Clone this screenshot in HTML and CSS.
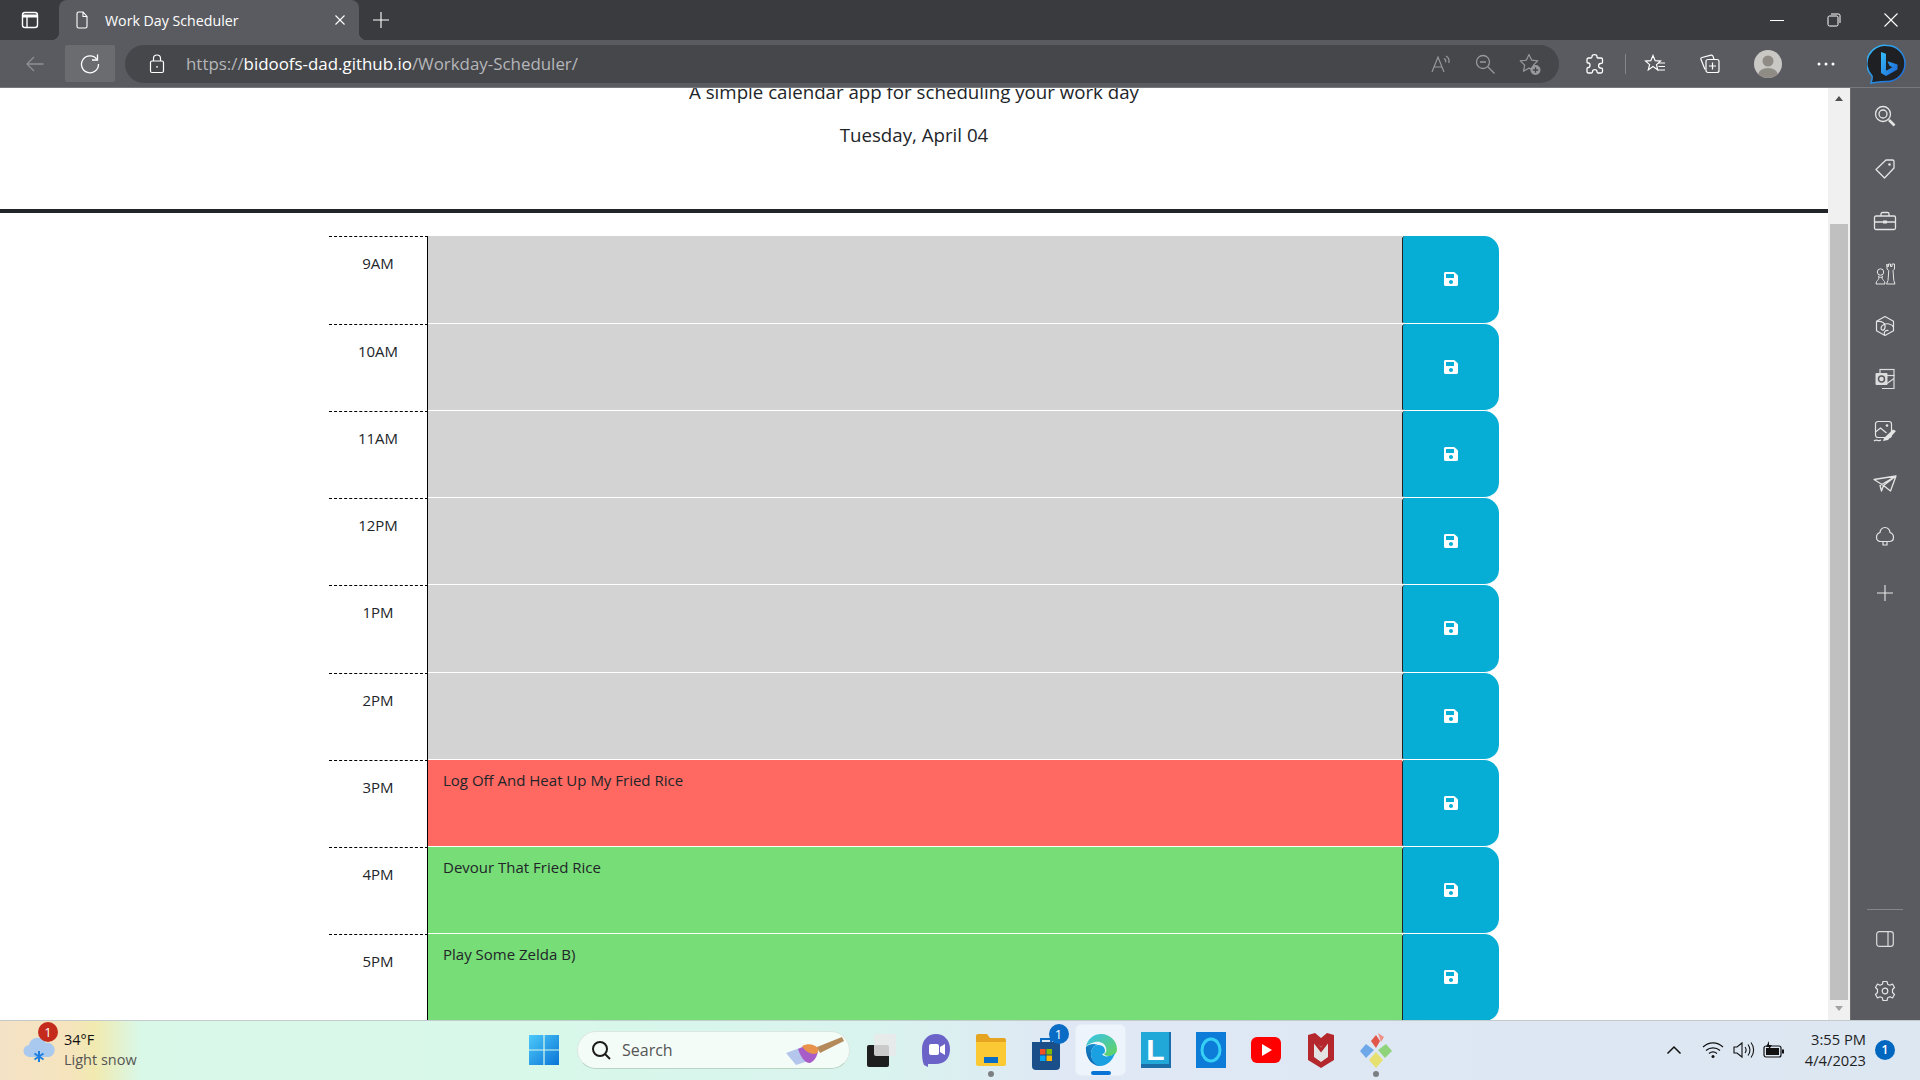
FILE: index.html
```html
<!DOCTYPE html>
<html lang="en">
<head>
<meta charset="utf-8">
<title>Work Day Scheduler</title>
<link rel="stylesheet" href="styles.css">
</head>
<body>
<svg class="defs" width="0" height="0" aria-hidden="true">
  <symbol id="save" viewBox="0 0 448 512"><path fill="currentColor" d="M433.941 129.941l-83.882-83.882A48 48 0 0 0 316.118 32H48C21.49 32 0 53.49 0 80v352c0 26.51 21.49 48 48 48h352c26.51 0 48-21.49 48-48V163.882a48 48 0 0 0-14.059-33.941zM224 416c-35.346 0-64-28.654-64-64 0-35.346 28.654-64 64-64s64 28.654 64 64c0 35.346-28.654 64-64 64zm96-304.52V212c0 6.627-5.373 12-12 12H76c-6.627 0-12-5.373-12-12V108c0-6.627 5.373-12 12-12h228.52c3.183 0 6.235 1.264 8.485 3.515l3.48 3.48A11.996 11.996 0 0 1 320 111.48z"/></symbol>
</svg>
<div class="app">
  <div class="tabstrip">
    <span class="ico panel-ico"><svg width="20" height="20" viewBox="0 0 20 20" fill="none" stroke="#fff" stroke-width="1.4"><rect x="2.500" y="2.500" width="15" height="15" rx="2.500"/><path d="M3 6h14" stroke-width="3"/><path d="M7 7v10"/></svg></span>
    <div class="tab">
      <svg class="doc" width="20" height="20" viewBox="0 0 20 20" fill="none" stroke="#fff" stroke-width="1.100"><path d="M5 3.500a1.500 1.500 0 0 1 1.500-1.500h4.500l4 4.500v10a1.500 1.500 0 0 1-1.500 1.500h-7A1.500 1.500 0 0 1 5 16.500z M11 2v4.500h4"/></svg>
      <span class="tab-title">Work Day Scheduler</span>
      <svg class="tab-x" width="12" height="12" viewBox="0 0 12 12" stroke="#fff" stroke-width="1.100"><path d="M1.500 1.500l9 9M10.500 1.500l-9 9"/></svg>
    </div>
    <svg class="plus" width="18" height="18" viewBox="0 0 18 18" stroke="#fff" stroke-width="1.100"><path d="M9 1v16M1 9h16"/></svg>
    <div class="winctl">
      <svg width="14" height="14" viewBox="0 0 14 14" stroke="#fff" stroke-width="1"><path d="M0 7.500h14"/></svg>
      <svg width="14" height="14" viewBox="0 0 14 14" fill="none" stroke="#fff" stroke-width="1"><rect x="1" y="3" width="10" height="10" rx="1.500"/><path d="M4 1h7.500A1.500 1.500 0 0 1 13 2.500V10"/></svg>
      <svg width="14" height="14" viewBox="0 0 14 14" stroke="#fff" stroke-width="1.100"><path d="M.5.500l13 13M13.500.500l-13 13"/></svg>
    </div>
  </div>
  <div class="toolbar">
    <span class="tbtn back"><svg width="20" height="20" viewBox="0 0 20 20" fill="none" stroke="#8e8f93" stroke-width="1.300"><path d="M18.500 10H2M9 3l-7 7 7 7"/></svg></span>
    <span class="tbtn reload"><svg width="22" height="22" viewBox="0 0 22 22" fill="none" stroke="#fff" stroke-width="1.300"><path d="M18 6.500A8.500 8.500 0 1 0 19.500 11"/><path d="M18.500 1.500v5.500h-5.500"/></svg></span>
    <div class="addr">
      <svg class="lock" width="16" height="20" viewBox="0 0 16 20" fill="none" stroke="#fff" stroke-width="1.200"><rect x="1.500" y="7" width="13" height="11.500" rx="1.500"/><path d="M4.500 7V4.500a3.500 3.500 0 0 1 7 0V7"/><circle cx="8" cy="12.800" r=".9" fill="#fff" stroke="none"/></svg>
      <span class="url"><span class="dim">https://</span>bidoofs-dad.github.io<span class="dim">/Workday-Scheduler/</span></span>
      <div class="addr-icons">
        <svg width="22" height="22" viewBox="0 0 22 22" fill="none" stroke="#98999c" stroke-width="1.200"><path d="M2 19L8 4l6 15M4 14h8"/><path d="M14 5.500c1.500.8 2 2.200 1.600 3.800M16 3c2.800 1.600 3.600 4.200 2.700 7"/></svg>
        <svg width="22" height="22" viewBox="0 0 22 22" fill="none" stroke="#98999c" stroke-width="1.300"><circle cx="9" cy="9" r="6.500"/><path d="M14 14l6.500 6.500M6 9h6"/></svg>
        <svg width="24" height="24" viewBox="0 0 24 24" fill="none" stroke="#98999c" stroke-width="1.200"><path d="M11 2.500l2.700 5.700 6.100.7-4.500 4.200 1.200 6-5.500-3-5.500 3 1.200-6L2.200 8.900l6.100-.7z" stroke-linejoin="round"/><circle cx="17.500" cy="18" r="5" fill="#98999c" stroke="none"/><path d="M17.500 15.300v5.400M14.800 18h5.400" stroke="#46474b" stroke-width="1.300"/></svg>
      </div>
    </div>
    <div class="tools">
      <svg class="t-ext" width="20" height="22" viewBox="0 0 20 22" fill="none" stroke="#fff" stroke-width="1.300"><path d="M7 3.500c0-2.500 5-2.500 5 0 0 1 0 1.500 1 1.500h3c1 0 1.500.5 1.500 1.500v3c0 1-1 1-2 1-2.500 0-2.500 4.500 0 4.500 1 0 2 0 2 1v2.500c0 1-.5 1.500-1.500 1.500h-3c-1 0-1-.8-1-1.500 0-2.500-4.500-2.500-4.500 0 0 .7 0 1.500-1 1.500H3.500c-1 0-1.500-.5-1.500-1.500v-3c0-1 1-1 1.500-1 2 0 2-4.500 0-4.500-.5 0-1.500 0-1.500-1V6.500C2 5.500 2.500 5 3.500 5H6c1 0 1-.7 1-1.500z"/></svg>
      <span class="sep"></span>
      <svg class="t-fav" width="22" height="22" viewBox="0 0 22 22" fill="none" stroke="#fff" stroke-width="1.200"><path d="M9 2.500l2.200 5.200 5.300.4-4 3.500 1.200 5.300L9 13.600l-4.700 3.300 1.300-5.300-4-3.500 5.200-.4z"/><path d="M14 10h7M14.500 13.500H21M13.500 17H21" stroke-width="1.100"/></svg>
      <svg class="t-col" width="22" height="22" viewBox="0 0 22 22" fill="none" stroke="#fff" stroke-width="1.200"><path d="M6 16.500L2 6.500c-.4-1 0-1.800 1-2l9-2.300c1-.2 1.700.2 2 1.100L15 6"/><rect x="7" y="6.500" width="13" height="13" rx="2"/><path d="M13.500 9.500v7M10 13h7"/></svg>
      <svg class="t-pro" width="28" height="28" viewBox="0 0 28 28"><defs><clipPath id="pc"><circle cx="14" cy="14" r="14"/></clipPath></defs><circle cx="14" cy="14" r="14" fill="#cac8c4"/><g clip-path="url(#pc)" fill="#8f8c85"><circle cx="14" cy="11" r="5.500"/><ellipse cx="14" cy="25" rx="10" ry="7"/></g></svg>
      <svg class="t-more" width="18" height="4" viewBox="0 0 18 4" fill="#fff"><circle cx="2" cy="2" r="1.500"/><circle cx="9" cy="2" r="1.500"/><circle cx="16" cy="2" r="1.500"/></svg>
      <svg class="t-bing" width="40" height="40" viewBox="0 0 40 40"><defs><linearGradient id="bg" x1="0" y1="0" x2="1" y2="1"><stop offset="0" stop-color="#37bdf8"/><stop offset="1" stop-color="#1b66d8"/></linearGradient></defs><path d="M20 1.500a18 18 0 0 1 0 36c-5 0-12 1-16 1.500 1-3 1.500-5 1-7A18 18 0 0 1 20 1.500z" fill="#1e2023" stroke="url(#bg)" stroke-width="1.500"/><path d="M14 8l5 1.800v17l6.500-3.600-3-1.400-2-4.600 10 3.400v5L19 32l-5-3z" fill="url(#bg)"/></svg>
    </div>
  </div>
  <div class="middle">
    <main class="page">
      <header class="jumbo">
        <p class="lead">A simple calendar app for scheduling your work day</p>
        <p class="today">Tuesday, April 04</p>
      </header>
      <div class="container">
        <div class="row"><div class="hour">9AM</div><textarea class="task past"></textarea><button class="save"><svg><use href="#save"/></svg></button></div>
        <div class="row"><div class="hour">10AM</div><textarea class="task past"></textarea><button class="save"><svg><use href="#save"/></svg></button></div>
        <div class="row"><div class="hour">11AM</div><textarea class="task past"></textarea><button class="save"><svg><use href="#save"/></svg></button></div>
        <div class="row"><div class="hour">12PM</div><textarea class="task past"></textarea><button class="save"><svg><use href="#save"/></svg></button></div>
        <div class="row"><div class="hour">1PM</div><textarea class="task past"></textarea><button class="save"><svg><use href="#save"/></svg></button></div>
        <div class="row"><div class="hour">2PM</div><textarea class="task past"></textarea><button class="save"><svg><use href="#save"/></svg></button></div>
        <div class="row"><div class="hour">3PM</div><textarea class="task present">Log Off And Heat Up My Fried Rice</textarea><button class="save"><svg><use href="#save"/></svg></button></div>
        <div class="row"><div class="hour">4PM</div><textarea class="task future">Devour That Fried Rice</textarea><button class="save"><svg><use href="#save"/></svg></button></div>
        <div class="row"><div class="hour">5PM</div><textarea class="task future">Play Some Zelda B)</textarea><button class="save"><svg><use href="#save"/></svg></button></div>
      </div>
    </main>
    <div class="scrollbar">
      <span class="arrow-up"></span>
      <span class="thumb"></span>
      <span class="arrow-down"></span>
    </div>
    <aside class="sidebar">
      <span class="sb"><svg width="22" height="22" viewBox="0 0 22 22" fill="none" stroke="#e4e4e4" stroke-width="1.300"><circle cx="9" cy="9" r="7.500"/><circle cx="9" cy="9" r="4"/><path d="M15 15l5.500 5.500" stroke-width="2.600"/></svg></span>
      <span class="sb"><svg width="22" height="22" viewBox="0 0 22 22" fill="none" stroke="#e4e4e4" stroke-width="1.300"><path d="M12 2h6.500A1.500 1.500 0 0 1 20 3.500V10L10.500 20 2 11.500z" stroke-linejoin="round"/><circle cx="15.500" cy="6.500" r="1.300" fill="#e4e4e4" stroke="none"/></svg></span>
      <span class="sb"><svg width="24" height="20" viewBox="0 0 24 20" fill="none" stroke="#e4e4e4" stroke-width="1.300"><rect x="1.500" y="5" width="21" height="13.500" rx="1.500"/><path d="M8 5V3a1.500 1.500 0 0 1 1.500-1.500h5A1.500 1.500 0 0 1 16 3v2M1.500 11h21"/><rect x="10" y="9.500" width="4" height="3" fill="#e4e4e4" stroke="none"/></svg></span>
      <span class="sb"><svg width="22" height="22" viewBox="0 0 22 22" fill="none" stroke="#e4e4e4" stroke-width="1"><path d="M13 1v2.500h1.500V1h2v2.500H18V1h2.500v5L19 7.500l.8 10 1.200 3.500H12.500l1.500-3.500.8-10L13 6V1z"/><circle cx="6.500" cy="9" r="3.200"/><path d="M5 12.500L4.500 14c.5.500 3.500.5 4 0L8 12.500M5 14c0 2-1 3-2.500 4.500L2 21h9l-.5-2.500C9 17 8 16 8 14"/></svg></span>
      <span class="sb"><svg width="22" height="22" viewBox="0 0 22 22" fill="none" stroke="#e4e4e4" stroke-width="1.200"><path d="M11 1.500l8.500 4.800v9.400L11 20.500l-8.500-4.800V6.300z" stroke-linejoin="round"/><path d="M3 6.500c5-1 9 2 8 6s-4 3-4 .5 4-5 8-4 4 3 4 3M10.500 20c-1-3 1-5 4-4.500"/></svg></span>
      <span class="sb"><svg width="22" height="22" viewBox="0 0 22 22" fill="none" stroke="#dcdcdc" stroke-width="1.200"><rect x="6" y="1.500" width="14" height="6"/><path d="M8 7.500h12v13H8M20 10.500l-7 5"/><rect x="1.500" y="5" width="12" height="12" rx="1" fill="#dcdcdc" stroke="none"/><circle cx="7.500" cy="11" r="3" fill="none" stroke="#5a5b60" stroke-width="1.500"/></svg></span>
      <span class="sb"><svg width="24" height="24" viewBox="0 0 24 24" fill="none" stroke="#e4e4e4" stroke-width="1.200"><rect x="2.500" y="1.500" width="16" height="16" rx="2.500"/><path d="M2.500 12l5-4 6 5"/><circle cx="14" cy="5.500" r="1.300" fill="#e4e4e4" stroke="none"/><path d="M11 18l9-8.500 3 1.500-8 9-5 1z" fill="#e4e4e4" stroke="none"/><path d="M1 21c3-2.500 4 1 7-1"/></svg></span>
      <span class="sb"><svg width="24" height="18" viewBox="0 0 24 18" fill="none" stroke="#e4e4e4" stroke-width="1.300"><path d="M1 4.500L23 1l-5.500 15-7-5.500zM23 1L7 10.500 8.500 16l2-5.500z" stroke-linejoin="round"/></svg></span>
      <span class="sb"><svg width="20" height="22" viewBox="0 0 20 22" fill="none" stroke="#e4e4e4" stroke-width="1.200"><path d="M10 1.500c3 0 5 2.500 5 5 2.500.8 3.500 2.500 3.500 5 0 2.500-2 4-4.500 4H6C3.500 15.500 1.500 14 1.500 11.500c0-2.500 1-4.200 3.500-5 0-2.500 2-5 5-5zM8 15.500v3.500h4v-3.500"/></svg></span>
      <span class="sb sb-plus"><svg width="16" height="16" viewBox="0 0 16 16" stroke="#e8e8e8" stroke-width="1.100"><path d="M8 0v16M0 8h16"/></svg></span>
      <span class="sb-spacer"></span>
      <span class="sb-line"></span>
      <span class="sb sb-low"><svg width="18" height="16" viewBox="0 0 18 16" fill="none" stroke="#dcdcdc" stroke-width="1.200"><rect x=".7" y=".7" width="16.600" height="14.600" rx="2.500"/><path d="M12 1v14"/></svg></span>
      <span class="sb sb-low"><svg width="22" height="22" viewBox="0 0 22 22" fill="none" stroke="#e4e4e4" stroke-width="1.200"><path d="M9 1.500h4l.7 2.800 2.300 1 2.500-1.300 2 3.500-2 2v3l2 2-2 3.500-2.500-1.300-2.300 1-.7 2.800H9l-.7-2.800-2.300-1-2.500 1.300-2-3.500 2-2v-3l-2-2 2-3.500L6 5.300l2.300-1z" stroke-linejoin="round"/><circle cx="11" cy="11" r="2.800"/></svg></span>
    </aside>
  </div>
  <footer class="taskbar">
    <div class="weather">
      <span class="w-ico">
        <svg width="34" height="34" viewBox="0 0 34 34"><path d="M8 24a6 6 0 0 1-1-12 9 9 0 0 1 17-2 7 7 0 0 1 3 14z" fill="#a9c9ee"/><path d="M17 18v11M12.500 20.500l9 6M21.500 20.500l-9 6" stroke="#1f7fe0" stroke-width="2"/></svg>
        <span class="w-badge">1</span>
      </span>
      <span class="w-text"><span class="w-temp">34°F</span><span class="w-cond">Light snow</span></span>
    </div>
    <div class="apps">
      <svg class="a-win" width="30" height="30" viewBox="0 0 30 30"><defs><linearGradient id="wg" x1="0" y1="0" x2="1" y2="1"><stop offset="0" stop-color="#4dcafa"/><stop offset="1" stop-color="#0a74d6"/></linearGradient></defs><path d="M0 0h14.400v14.400H0zM15.600 0H30v14.400H15.600zM0 15.600h14.400V30H0zM15.600 15.600H30V30H15.600z" fill="url(#wg)"/></svg>
      <div class="search">
        <svg width="22" height="22" viewBox="0 0 22 22" fill="none" stroke="#1b1b1b" stroke-width="2"><circle cx="10" cy="10" r="7"/><path d="M15 15l5 5"/></svg>
        <span class="s-label">Search</span>
        <svg class="s-art" width="62" height="30" viewBox="0 0 62 30"><path d="M2 18l22-8 6 14-18 6z" fill="#a4b8e8" opacity=".8"/><path d="M14 14c8-4 14-4 20 0 0 6-3 12-8 14-6 0-10-8-12-14z" fill="#a85cc8"/><path d="M18 11c6-3 11-2 15 1 3 3 1 7-3 7-5 0-10-4-12-8z" fill="#e8924a"/><path d="M33 12L58 2l2 4-24 12z" fill="#b58a5a"/></svg>
      </div>
      <span class="app-i"><svg width="30" height="34" viewBox="0 0 30 34"><rect x="1" y="12" width="22" height="22" rx="2" fill="#1e1e1e"/><rect x="8" y="1" width="22" height="22" rx="2" fill="#e9e9e9" opacity=".85"/></svg></span>
      <span class="app-i"><svg width="30" height="34" viewBox="0 0 30 34"><path d="M15 1c8 0 14 6 14 15 0 10-6 15-14 15H7v3l-4-2C1 28 1 22 1 16 1 7 7 1 15 1z" fill="#6b63c8"/><rect x="8" y="11" width="10" height="11" rx="2" fill="#fff"/><path d="M19 14l5-3v11l-5-3z" fill="#fff"/></svg></span>
      <span class="app-i dot"><svg width="32" height="34" viewBox="0 0 32 34"><path d="M1 3a2 2 0 0 1 2-2h9l3 4h14a2 2 0 0 1 2 2v4H1z" fill="#e6a520"/><path d="M1 9h30v22a2 2 0 0 1-2 2H3a2 2 0 0 1-2-2z" fill="#fbc934"/><rect x="9" y="24" width="14" height="6" fill="#0a6cc4"/></svg></span>
      <span class="app-i"><span class="store"><svg width="30" height="36" viewBox="0 0 30 36"><path d="M10 8V5h10v3" fill="none" stroke="#0a6cc4" stroke-width="2"/><path d="M1 8h28v24a4 4 0 0 1-4 4H5a4 4 0 0 1-4-4z" fill="#1a4f8a"/><rect x="9" y="15" width="5.500" height="5.500" fill="#f25022"/><rect x="15.500" y="15" width="5.500" height="5.500" fill="#7fba00"/><rect x="9" y="21.500" width="5.500" height="5.500" fill="#00a4ef"/><rect x="15.500" y="21.500" width="5.500" height="5.500" fill="#ffb900"/></svg><span class="s-badge">1</span></span></span>
      <span class="app-i active"><svg width="32" height="32" viewBox="0 0 32 32"><defs><linearGradient id="eg" x1="0" y1="1" x2="1" y2="0"><stop offset="0" stop-color="#0c59a4"/><stop offset="1" stop-color="#1ba1e2"/></linearGradient><linearGradient id="eg2" x1="0" y1="0" x2="1" y2="1"><stop offset="0" stop-color="#35c1f1"/><stop offset="1" stop-color="#66d45a"/></linearGradient></defs><path d="M16 0c9 0 16 7 16 15 0 5-4 7-8 7-3 0-5-1-5-2 2-1 3-3 2-6-1-5-6-7-11-6C5 9 2 11 1 13 2 6 8 0 16 0z" fill="url(#eg2)"/><path d="M1 13c3-3 8-4 12-2 -4 0-7 4-7 9 0 6 5 11 11 12C8 33 0 25 1 13z" fill="url(#eg)"/><path d="M13 11c4 0 7 2 7 6 0 1-1 3-3 3 1 2 4 3 7 2 2 0 4-1 6-3-2 7-8 13-15 13-6-1-9-7-9-12 0-5 3-9 7-9z" fill="#1ba1e2"/></svg></span>
      <span class="app-i"><span class="l-tile">L</span></span>
      <span class="app-i"><span class="alexa"><svg width="30" height="36" viewBox="0 0 30 36"><rect width="30" height="36" fill="#0d7bd8"/><ellipse cx="15" cy="18" rx="9" ry="11" fill="none" stroke="#37d0f5" stroke-width="3"/></svg></span></span>
      <span class="app-i"><svg width="30" height="26" viewBox="0 0 30 26"><rect width="30" height="26" rx="6" fill="#f00"/><path d="M11 7l10 6-10 6z" fill="#fff"/></svg></span>
      <span class="app-i"><svg width="26" height="36" viewBox="0 0 26 36"><path d="M0 3l7-2 6 5 6-5 7 2v25L13 36 0 28z" fill="#b3272d"/><path d="M6 9l7 6 7-6v16l-7 5-7-5z" fill="#e3e3e3"/><path d="M6 9l7 9 7-9" fill="none" stroke="#b3272d" stroke-width="3"/></svg></span>
      <span class="app-i dot"><svg width="32" height="36" viewBox="0 0 32 36"><path d="M16 3l4 6-4 7-5-7z" fill="#e2554a"/><path d="M18 1l6 4-3 5z" fill="#ef9088"/><path d="M6 12l8 6-8 8-6-7z" fill="#6fa8e8"/><path d="M26 12l6 7-7 7-7-8z" fill="#8fd47a"/><path d="M16 20l7 8-7 8-7-8z" fill="#e6e070"/></svg></span>
    </div>
    <div class="tray">
      <svg class="tr-chev" width="16" height="10" viewBox="0 0 16 10" fill="none" stroke="#111" stroke-width="1.500"><path d="M1.500 8.500L8 2l6.500 6.500"/></svg>
      <svg class="tr-wifi" width="22" height="18" viewBox="0 0 22 18" fill="none" stroke="#111" stroke-width="1.200"><path d="M1 6c6-5.500 14-5.500 20 0M4 9.500c4-3.500 10-3.500 14 0M7 12.500c2.500-2 5.500-2 8 0"/><circle cx="11" cy="15.500" r="1.500" fill="#111" stroke="none"/></svg>
      <svg class="tr-vol" width="22" height="18" viewBox="0 0 22 18" fill="none" stroke="#111" stroke-width="1.100"><path d="M1 6v6h3l5 4V2L4 6z"/><path d="M12 6c1.500 2 1.500 4 0 6M15 3.500c2.500 3.500 2.500 7.500 0 11M18 1.500c3.500 4.500 3.500 10.500 0 15"/></svg>
      <svg class="tr-bat" width="22" height="18" viewBox="0 0 22 18"><rect x="1" y="5" width="17" height="11" rx="2" fill="none" stroke="#111" stroke-width="1.200"/><rect x="3" y="7" width="13" height="7" fill="#111"/><rect x="19" y="8.500" width="2" height="4" fill="#111"/><path d="M6 0L3 6h3l-1 4 4-6H6z" fill="#111"/></svg>
      <div class="clock"><span>3:55 PM</span><span>4/4/2023</span></div>
      <span class="notif">1</span>
    </div>
  </footer>
</div>
</body>
</html>
```
FILE: styles.css
```css
* { box-sizing: border-box; }
html, body { margin: 0; height: 100%; overflow: hidden; }
body { font-family: "Open Sans", "Liberation Sans", sans-serif; background: #fff; color: #212529; }
.defs { display: block; height: 0; }
.app { display: flex; flex-direction: column; height: 1080px; width: 1920px; overflow: hidden; }

/* tab strip */
.tabstrip { height: 40px; flex: none; background: #3a3b3f; display: flex; align-items: center; }
.panel-ico { width: 59px; display: flex; justify-content: center; }
.tab { position: relative; width: 300px; height: 40px; background: #5a5b60; border-radius: 8px 8px 0 0; display: flex; align-items: center; padding: 0 14px 0 13px; color: #fff; }
.tab::before, .tab::after { content: ""; position: absolute; bottom: 0; width: 8px; height: 8px; }
.tab::before { left: -8px; background: radial-gradient(circle at 0 0, #3a3b3f 8px, #5a5b60 8.500px); }
.tab::after { right: -8px; background: radial-gradient(circle at 100% 0, #3a3b3f 8px, #5a5b60 8.500px); }
.doc { flex: none; }
.tab-title { margin-left: 13px; font-size: 14.200px; flex: 1; color: #fff; white-space: nowrap; }
.tab-x { flex: none; margin-right: -1px; }
.plus { margin-left: 13px; }
.winctl { margin-left: auto; display: flex; gap: 43px; padding-right: 22px; }

/* toolbar */
.toolbar { height: 48px; flex: none; background: #5a5b60; display: flex; align-items: center; border-bottom: 1px solid #77787b; }
.tbtn { display: flex; align-items: center; justify-content: center; height: 37px; }
.back { width: 50px; margin-left: 10px; margin-right: 5px; }
.reload { width: 50px; background: #6b6c70; border-radius: 2px; }
.addr { width: 1434px; height: 38px; margin-left: 10px; border-radius: 19px; background: #46474b; display: flex; align-items: center; padding-left: 24px; padding-right: 17px; }
.lock { flex: none; }
.url { margin-left: 21px; font-size: 16.900px; color: #fff; white-space: nowrap; }
.dim { color: #b5b6b9; }
.addr-icons { margin-left: auto; display: flex; align-items: center; gap: 22px; }
.tools { display: flex; align-items: center; flex: 1; padding-left: 26px; }
.sep { width: 1px; height: 20px; background: #85868a; margin-left: 20px; }
.t-fav { margin-left: 18px; }
.t-col { margin-left: 33px; }
.t-pro { margin-left: 33px; }
.t-more { margin-left: 35px; }
.t-bing { margin-left: 32px; }

/* middle */
.middle { flex: 1; min-height: 0; display: flex; }
.page { width: 1828px; flex: none; height: 100%; overflow: hidden; background: #fff; }
.jumbo { height: 125px; overflow: hidden; display: flex; flex-direction: column; justify-content: flex-end; align-items: center; border-bottom: 4px solid #212529; padding-bottom: 61px; color: #212529; }
.jumbo p { margin: 0; white-space: nowrap; line-height: 27px; flex: none; }
.lead { font-size: 18.700px; margin-bottom: 16px !important; }
.today { font-size: 18.700px; }
.container { width: 1170px; margin: 23.300px auto 0; }
.row { display: flex; height: 87.250px; }
.hour { width: 99px; flex: none; border-top: 1px dashed #000; border-right: 1px solid #000; padding-top: 14px; font-size: 15px; line-height: 24px; white-space: nowrap; text-align: center; }
.task { flex: 1; min-width: 0; border: 0; border-bottom: 1px solid #fff; border-radius: 0; padding: 8px 15px; margin: 0; resize: none; outline: 0; overflow: hidden; font: 15px/24px "Open Sans", sans-serif; color: #212529; display: block; }
.past { background: #d3d3d3; }
.present { background: #ff6961; }
.future { background: #77dd77; }
.save { width: 97px; flex: none; border: 0; border-left: 1px solid #222; border-bottom: 1px solid #fff; margin: 0; padding: 0; background: #06aed5; border-radius: 3px 15px 15px 3px; color: #fff; display: flex; align-items: center; justify-content: center; }
.save svg { width: 14px; height: 16px; }

/* scrollbar */
.scrollbar { width: 22px; flex: none; background: #f0f0f0; display: flex; flex-direction: column; align-items: center; padding-top: 8px; }
.arrow-up { width: 0; height: 0; border: 4.500px solid transparent; border-top: 0; border-bottom: 5px solid #505050; flex: none; }
.thumb { width: 18px; height: 776px; background: #c0c0c0; margin-top: 123px; flex: none; }
.arrow-down { width: 0; height: 0; border: 4.500px solid transparent; border-bottom: 0; border-top: 5px solid #a3a3a3; flex: none; margin-top: 6px; }

/* sidebar */
.sidebar { flex: 1; background: #5a5b60; border-left: 1px solid #6a6b6f; display: flex; flex-direction: column; align-items: center; padding: 1.700px 2px 3px 0; }
.sb { height: 52.600px; width: 100%; flex: none; display: flex; align-items: center; justify-content: center; }
.sb-plus { margin-top: 3.600px; }
.sb-spacer { flex: 1; }
.sb-line { width: 36px; height: 1px; background: #85868a; margin-bottom: 3px; }
.sb-low { height: 52px; }

/* taskbar */
.taskbar { height: 60px; flex: none; border-top: 1px solid #c3cbcc; padding-bottom: 2px; background: linear-gradient(90deg, #f4e2c6 0, #f5e4bd 70px, #f1eab0 95px, #d9f8e8 140px, #d8f8ea 560px, #d9f3ee 880px, #dfe8f4 1060px, #dce7f2 1920px); display: flex; align-items: center; color: #111; }
.weather { width: 526px; flex: none; display: flex; align-items: center; padding-left: 22px; }
.w-ico { position: relative; width: 34px; height: 34px; display: block; flex: none; }
.w-badge { position: absolute; left: 16px; top: -11px; width: 20px; height: 20px; border-radius: 50%; background: #c42b1c; color: #fff; font-size: 13px; line-height: 20px; text-align: center; }
.w-text { display: flex; flex-direction: column; margin-left: 8px; font-size: 14.500px; line-height: 20px; }
.w-temp { color: #111; }
.w-cond { color: #555; }
.apps { display: flex; align-items: center; width: 900px; flex: none; }
.a-win { flex: none; margin-left: 3px; }
.search { width: 273px; height: 38px; margin-left: 18px; border-radius: 19px; background: #f4fcf8; border: 1px solid #dbe8e2; border-bottom-color: #b9d3c7; display: flex; align-items: center; padding-left: 12px; flex: none; }
.s-label { margin-left: 10px; font-size: 16px; color: #555; }
.s-art { margin-left: auto; margin-right: 3px; }
.app-i { width: 55px; height: 50px; flex: none; display: flex; align-items: center; justify-content: center; position: relative; }
.search + .app-i { margin-left: 3px; }
.dot::after { content: ""; position: absolute; bottom: -2px; left: 50%; margin-left: -3px; width: 6px; height: 6px; border-radius: 50%; background: #7b7f82; }
.active { background: #eef4fb; border-radius: 5px; width: 49px; margin: 0 3px; box-shadow: 0 0 0 1px #e6edf5; }
.active::after { content: ""; position: absolute; bottom: 0; left: 50%; margin-left: -10px; width: 20px; height: 4px; border-radius: 2px; background: #0a74d6; }
.store { position: relative; display: block; width: 30px; height: 36px; margin-top: 4px; }
.s-badge { position: absolute; right: -8px; top: -10px; width: 20px; height: 20px; border-radius: 50%; background: #0a6cc4; color: #fff; font-size: 13px; line-height: 20px; text-align: center; }
.l-tile { width: 30px; height: 36px; background: #21a8d8; color: #fff; font: bold 30px/36px "Liberation Sans", sans-serif; text-align: center; display: block; box-shadow: inset -6px -8px 0 -4px #1a6fa8; }
.alexa { display: block; width: 30px; height: 36px; }
.tray { flex: 1; display: flex; align-items: center; }
.tr-chev { margin-left: 240px; }
.tr-wifi { margin-left: 20px; }
.tr-vol { margin-left: 9px; }
.tr-bat { margin-left: 8px; }
.clock { width: 71px; margin-left: 10px; display: flex; flex-direction: column; align-items: flex-end; font-size: 14.700px; line-height: 21px; color: #222; white-space: nowrap; }
.notif { width: 20px; height: 20px; border-radius: 50%; background: #0067c0; color: #fff; font-size: 12px; font-weight: 600; line-height: 20px; text-align: center; margin-left: 9px; }
```
